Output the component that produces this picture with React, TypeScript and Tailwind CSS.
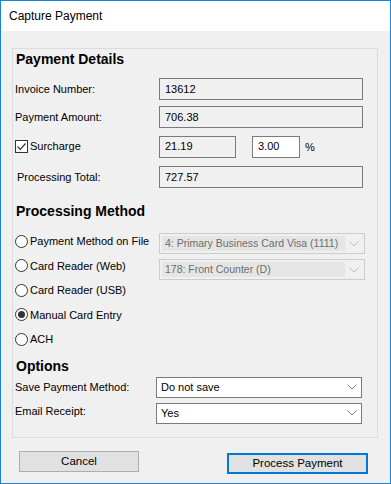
import type { ReactNode } from "react";

const font = { fontFamily: '"Liberation Sans", Arial, sans-serif' };

function Chevron({ color = "#7a7a7a" }: { color?: string }) {
  return (
    <svg width="10" height="6" viewBox="0 0 10 6" fill="none">
      <path d="M0.5 0.5 L5 5 L9.5 0.5" stroke={color} strokeWidth="1" />
    </svg>
  );
}

function Field({ value, width = "w-[204px]", white = false }: { value: string; width?: string; white?: boolean }) {
  return (
    <div
      className={`${width} flex h-[22px] items-center border border-[#7a7a7a] pl-[5px] text-[11px] text-black ${
        white ? "bg-white" : "bg-[#f0f0f0]"
      }`}
    >
      {value}
    </div>
  );
}

function Radio({ label, checked = false }: { label: string; checked?: boolean }) {
  return (
    <div className="flex h-[24.5px] items-center whitespace-nowrap">
      <span className="flex h-[13px] w-[13px] shrink-0 items-center justify-center rounded-full border border-[#333] bg-white">
        {checked ? <span className="h-[7px] w-[7px] rounded-full bg-[#333]" /> : null}
      </span>
      <span className="ml-[2px] text-[11px] text-black">{label}</span>
    </div>
  );
}

function DisabledSelect({ value }: { value: string }) {
  return (
    <div className="flex h-[21px] w-[206px] items-center border border-[#cccccc] bg-[#f0f0f0] p-[2px]">
      <div className="flex h-full w-[183px] items-center overflow-hidden whitespace-nowrap bg-[#e5e5e5] pl-[3px] text-[10.5px] text-[#6d6d6d]">
        {value}
      </div>
      <div className="flex flex-1 justify-center">
        <Chevron color="#bfbfbf" />
      </div>
    </div>
  );
}

function Select({ value }: { value: string }) {
  return (
    <div className="flex h-[21px] w-[206px] items-center justify-between border border-[#7a7a7a] bg-white pl-[4px] pr-[4px] text-[11px] text-black">
      <span>{value}</span>
      <Chevron />
    </div>
  );
}

function Heading({ children, className = "" }: { children: ReactNode; className?: string }) {
  return <div className={`flex items-center pl-[3px] text-[14px] font-bold text-black ${className}`}>{children}</div>;
}

export default function App() {
  return (
    <div style={font} className="flex h-[484px] w-[391px] flex-col border border-[#1883d7] bg-[#f0f0f0]">
      <div className="flex h-[30px] items-center bg-white pl-[8px] text-[12px] text-black">Capture Payment</div>

      <div className="ml-[11px] mt-[17px] flex h-[390px] w-[366px] flex-col border border-[#dcdcdc] text-[11px]">
        <Heading className="h-[20px]">Payment Details</Heading>

        <div className="mt-[9px] flex h-[22px] items-center">
          <span className="w-[146px] pl-[2px]">Invoice Number:</span>
          <Field value="13612" />
        </div>
        <div className="mt-[6px] flex h-[22px] items-center">
          <span className="w-[146px] pl-[2px]">Payment Amount:</span>
          <Field value="706.38" />
        </div>
        <div className="mt-[7px] flex h-[23px] items-center">
          <div className="flex w-[146px] items-center pl-[2px]">
            <span className="flex h-[13px] w-[13px] items-center justify-center border border-[#333] bg-white">
              <svg width="11" height="11" viewBox="0 0 11 11" fill="none">
                <path d="M1.5 5.5 L4.3 8.3 L9.5 2.5" stroke="#333" strokeWidth="1.2" />
              </svg>
            </span>
            <span className="ml-[2px]">Surcharge</span>
          </div>
          <Field value="21.19" width="w-[77px]" />
          <div className="ml-[16px]">
            <Field value="3.00" width="w-[48px]" white />
          </div>
          <span className="ml-[5px] mt-[2px]">%</span>
        </div>
        <div className="mt-[8px] flex h-[22px] items-center">
          <span className="w-[146px] pl-[4px]">Processing Total:</span>
          <Field value="727.57" />
        </div>

        <Heading className="mt-[13px] h-[20px]">Processing Method</Heading>

        <div className="mt-[8px] flex">
          <div className="flex w-[146px] flex-col pl-[2px]">
            <Radio label="Payment Method on File" />
            <Radio label="Card Reader (Web)" />
            <Radio label="Card Reader (USB)" />
            <Radio label="Manual Card Entry" checked />
            <Radio label="ACH" />
          </div>
          <div className="mt-[4px] flex flex-col gap-[5px]">
            <DisabledSelect value="4: Primary Business Card Visa (1111)" />
            <DisabledSelect value="178: Front Counter (D)" />
          </div>
        </div>

        <Heading className="mt-[6px] h-[18px]">Options</Heading>

        <div className="mt-[1px] flex h-[21px] items-center">
          <span className="w-[143px] pl-[2px]">Save Payment Method:</span>
          <Select value="Do not save" />
        </div>
        <div className="mt-[5px] flex h-[21px]">
          <span className="w-[143px] pl-[2px]">Email Receipt:</span>
          <Select value="Yes" />
        </div>
      </div>

      <div className="mt-[13px] flex items-start">
        <button className="ml-[18px] h-[21px] w-[120px] border border-[#adadad] bg-[#e1e1e1] text-[11.5px] text-black">
          Cancel
        </button>
        <button className="ml-[88px] mt-[2px] h-[21px] w-[141px] border-2 border-[#0078d7] bg-[#e1e1e1] text-[11.5px] text-black">
          Process Payment
        </button>
      </div>
    </div>
  );
}
